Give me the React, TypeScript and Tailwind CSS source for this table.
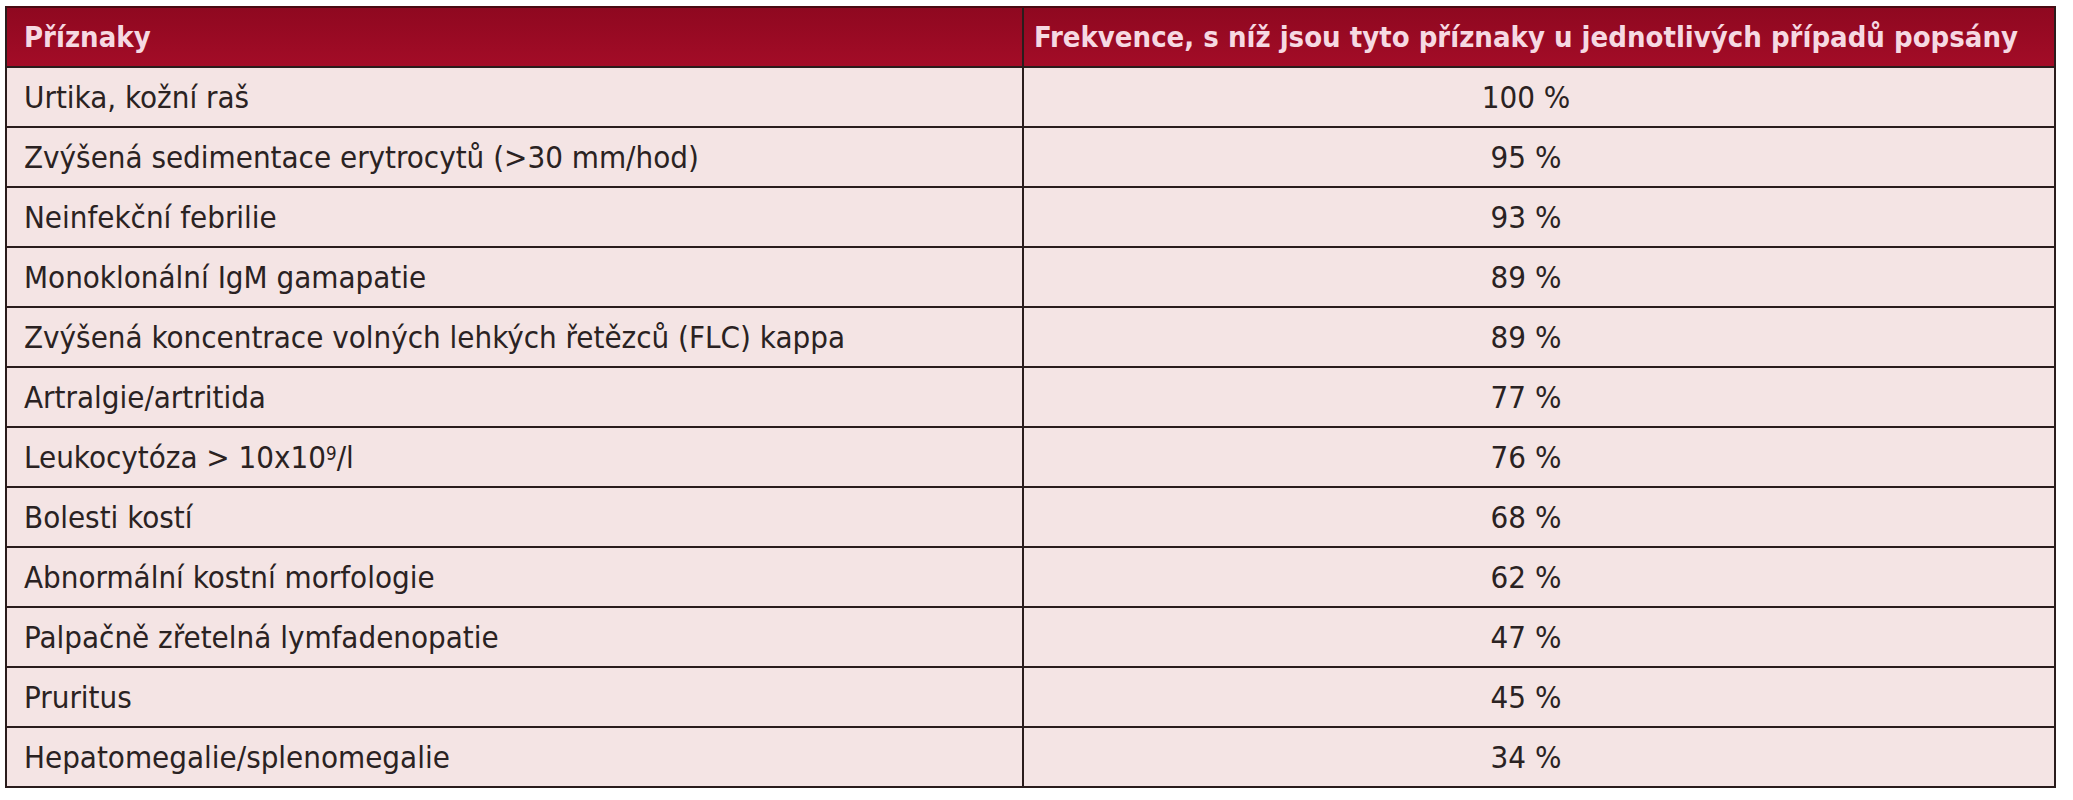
import React from "react";

const rows: [React.ReactNode, string][] = [
  ["Urtika, kožní raš", "100 %"],
  ["Zvýšená sedimentace erytrocytů (>30 mm/hod)", "95 %"],
  ["Neinfekční febrilie", "93 %"],
  ["Monoklonální IgM gamapatie", "89 %"],
  ["Zvýšená koncentrace volných lehkých řetězců (FLC) kappa", "89 %"],
  ["Artralgie/artritida", "77 %"],
  [
    <>
      Leukocytóza &gt; 10x10<sup className="text-[0.6em] relative -top-[0.15em]">9</sup>/l
    </>,
    "76 %",
  ],
  ["Bolesti kostí", "68 %"],
  ["Abnormální kostní morfologie", "62 %"],
  ["Palpačně zřetelná lymfadenopatie", "47 %"],
  ["Pruritus", "45 %"],
  ["Hepatomegalie/splenomegalie", "34 %"],
];

export default function App() {
  return (
    <div
      className="w-[2073px] h-[800px] bg-white pt-[6px] pl-[5px]"
      style={{ fontFamily: '"DejaVu Sans Condensed", "DejaVu Sans", sans-serif', fontStretch: "condensed" }}
    >
      <div className="w-[2051px] border-x-2 border-b-2 border-[#2a1c1c] border-t-2 border-t-[#4a0a12]">
        <div className="grid grid-cols-[1015px_1fr] h-[58px] bg-gradient-to-b from-[#8f0820] to-[#a30c27] text-[#f6d9e2] font-bold text-[29px] leading-none whitespace-nowrap">
          <div className="flex items-center pl-[17px]">Příznaky</div>
          <div className="flex items-center justify-center border-l-2 border-[#2a1c1c] pr-[26px]">
            Frekvence, s níž jsou tyto příznaky u jednotlivých případů popsány
          </div>
        </div>
        {rows.map(([label, value], i) => (
          <div
            key={i}
            className="grid grid-cols-[1015px_1fr] h-[60px] border-t-2 border-[#2a1c1c] bg-[#f4e4e4] text-[#2a2222] text-[31px] leading-none whitespace-nowrap"
          >
            <div className="flex items-center pl-[17px]">{label}</div>
            <div className="flex items-center justify-center border-l-2 border-[#2a1c1c] pr-[26px]">{value}</div>
          </div>
        ))}
      </div>
    </div>
  );
}
